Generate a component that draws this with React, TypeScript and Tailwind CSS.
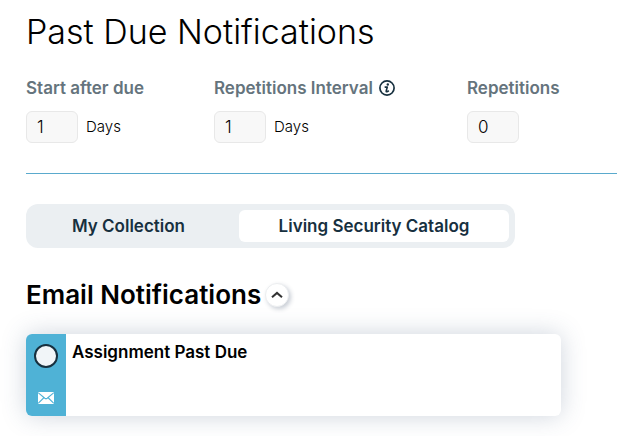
import { useState } from "react";

const fields = [
  { id: "start", label: "Start after due", value: "1", unit: "Days", info: false },
  { id: "interval", label: "Repetitions Interval", value: "1", unit: "Days", info: true },
  { id: "repetitions", label: "Repetitions", value: "0", unit: "", info: false },
];

const tabs = ["My Collection", "Living Security Catalog"];

function InfoIcon() {
  return (
    <svg width="16" height="16" viewBox="0 0 16 16" fill="none" className="shrink-0">
      <circle cx="8" cy="8" r="7.1" stroke="#17303f" strokeWidth="1.7" />
      <circle cx="8.8" cy="4.5" r="1.2" fill="#17303f" />
      <path
        d="M6.2 7.1h2.1L7.2 10.9q-.2 1 .7.8l1.5-.7"
        stroke="#17303f"
        strokeWidth="1.6"
        strokeLinecap="round"
        strokeLinejoin="round"
      />
    </svg>
  );
}

function MailIcon() {
  return (
    <svg width="16" height="12" viewBox="0 0 16 12" fill="none">
      <rect width="16" height="12" rx="1.2" fill="#fff" />
      <path
        d="M0.4 0.8 6.8 6.2Q8 7.1 9.2 6.2L15.6 0.8M0.4 11.2 5.6 6M15.6 11.2 10.4 6"
        stroke="#4fb2d6"
        strokeWidth="1.1"
      />
    </svg>
  );
}

export default function App() {
  const [tab, setTab] = useState(tabs[1]);
  const [open, setOpen] = useState(true);

  return (
    <main className="pl-[26px] pt-3 pb-5 bg-white font-['Inter',sans-serif] text-black">
      <h1 className="text-[34px] leading-10 font-light">Past Due Notifications</h1>

      <div className="mt-6 pb-[30px] grid grid-cols-[188fr_253fr_150fr] border-b border-[#5aaacd]">
        {fields.map((f) => (
          <div key={f.id}>
            <div className="flex items-center gap-1.5 h-6">
              <label htmlFor={f.id} className="text-[17px] leading-6 font-semibold text-[#65747d]">
                {f.label}
              </label>
              {f.info && <InfoIcon />}
            </div>
            <div className="mt-[11px] flex items-center gap-2">
              <input
                id={f.id}
                defaultValue={f.value}
                className="w-[52px] h-8 px-2.5 rounded-md border border-[#e8e8e8] bg-[#f8f8f8] text-[17px] font-light"
              />
              <span className="text-[15px] leading-5 font-light">{f.unit}</span>
            </div>
          </div>
        ))}
      </div>

      <div className="mt-[30px] w-[489px] max-w-full flex gap-3.5 p-1.5 rounded-xl bg-[#ebeff2]">
        {tabs.map((t) => (
          <button
            key={t}
            onClick={() => setTab(t)}
            className={`h-8 rounded-md text-[17px] leading-6 font-semibold text-[#17303f] ${
              t === tabs[0] ? "flex-[193]" : "flex-[270]"
            } ${t === tab ? "bg-white" : ""}`}
          >
            {t}
          </button>
        ))}
      </div>

      <div className="mt-[30px] flex items-center gap-1">
        <h2 className="text-[26px] leading-[34px] font-semibold">Email Notifications</h2>
        <button
          aria-label="Toggle email notifications"
          onClick={() => setOpen(!open)}
          className="size-6 rounded-full flex items-center justify-center bg-white border border-[#eceef0] shadow-[2px_2px_4px_rgba(40,60,90,0.25)]"
        >
          <svg width="12" height="8" viewBox="0 0 12 8" fill="none">
            <path d="M1 6.3 6 1.9l5 4.4" stroke="#333" strokeWidth="2" />
          </svg>
        </button>
      </div>

      {open && (
        <div className="mt-[22px] w-[535px] max-w-full h-[82px] flex rounded-md overflow-hidden bg-white shadow-[0_0_24px_rgba(60,85,120,0.25)]">
          <div className="w-10 pt-2.5 pb-3 flex flex-col items-center justify-between bg-[#4fb2d6]">
            <input
              id="past-due"
              type="radio"
              className="size-6 appearance-none rounded-full border-2 border-[#17303f] bg-[#f1f5f8] checked:bg-[#17303f]"
            />
            <MailIcon />
          </div>
          <label htmlFor="past-due" className="pl-1.5 pt-1.5 text-[17px] leading-6 font-semibold">
            Assignment Past Due
          </label>
        </div>
      )}
    </main>
  );
}
